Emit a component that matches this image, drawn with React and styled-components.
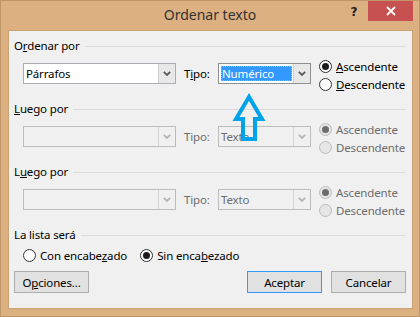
import React from 'react';
import styled, { createGlobalStyle } from 'styled-components';

const GlobalStyle = createGlobalStyle`
  html, body {
    margin: 0;
    padding: 0;
    background: #ffffff;
  }
  body {
    font-family: "Noto Sans", "Open Sans", Arial, sans-serif;
    font-size: 11.5px;
    letter-spacing: -0.15px;
  }
`;

const Window = styled.div`
  position: relative;
  width: 420px;
  height: 317px;
  box-sizing: border-box;
  background: #dcb080;
  border: 1px solid #bf9667;
  display: flex;
  flex-direction: column;
`;

const TitleBar = styled.div`
  height: 29px;
  display: grid;
  grid-template-columns: 1fr auto 1fr;
  align-items: start;
`;

const Title = styled.div`
  grid-column: 2;
  font-size: 14px;
  letter-spacing: 0;
  line-height: 28px;
  color: #333333;
`;

const Controls = styled.div`
  grid-column: 3;
  justify-self: end;
  display: flex;
  align-items: flex-start;
  margin-right: 6px;
`;

const HelpButton = styled.div`
  width: 16px;
  margin-right: 6px;
  font-family: "DejaVu Sans", sans-serif;
  font-weight: bold;
  font-size: 12px;
  line-height: 22px;
  color: #1e1e1e;
  text-align: center;
`;

const CloseButton = styled.div`
  width: 45px;
  height: 20px;
  background: #c75050;
  display: flex;
  align-items: center;
  justify-content: center;
`;

const Panel = styled.div`
  flex: 1;
  margin: 0 6px 7px 7px;
  border: 1px solid #c9a274;
  background: #f0f0f0;
  padding: 7px 6px 0 5px;
  display: flex;
  flex-direction: column;
`;

const Section = styled.div`
  display: flex;
  flex-direction: column;
  margin-bottom: 8px;
`;

const GroupHeader = styled.div`
  height: 16px;
  display: flex;
  align-items: center;
  gap: 5px;
  margin-bottom: 3px;
  color: #000000;
  line-height: 16px;
`;

const GroupLine = styled.div`
  flex: 1;
  height: 1px;
  background: #dcdcdc;
  margin-top: 1px;
`;

const Row = styled.div`
  height: 36px;
  display: flex;
  align-items: flex-start;
  padding-left: 9px;

  & > * {
    flex-shrink: 0;
  }
`;

const Combo = styled.div`
  margin-top: 6px;
  width: ${(p) => p.$width}px;
  height: 21px;
  box-sizing: border-box;
  border: 1px solid ${(p) => (p.$disabled ? '#bcbcbc' : p.$focused ? '#8e8f8f' : '#abadb3')};
  background: ${(p) => (p.$disabled ? '#f0f0f0' : '#ffffff')};
  display: flex;
`;

const ComboValue = styled.div`
  flex: 1;
  padding-left: 2px;
  line-height: 19px;
  color: ${(p) => (p.$disabled ? '#6d6d6d' : '#000000')};
  overflow: hidden;
  white-space: nowrap;
`;

const Selection = styled.div`
  flex: 1;
  margin: 2px 1px 2px 2px;
  padding-left: 1px;
  background: #3399ff;
  outline: 1px dotted #f5a25a;
  outline-offset: -1px;
  color: #ffffff;
  line-height: 15px;
  white-space: nowrap;
`;

const DropButton = styled.div`
  width: 16px;
  border-left: 1px solid ${(p) => (p.$disabled ? '#d4d4d4' : '#d0d0d0')};
  background: ${(p) => (p.$disabled ? '#f0f0f0' : '#e8e8e8')};
  display: flex;
  align-items: center;
  justify-content: center;
`;

const TypeLabel = styled.div`
  margin: 6px 0 0 8px;
  width: 34px;
  line-height: 21px;
  color: ${(p) => (p.$disabled ? '#6d6d6d' : '#000000')};
`;

const RadioColumn = styled.div`
  margin-left: 8px;
  display: flex;
  flex-direction: column;
`;

const RadioItem = styled.div`
  height: 18px;
  display: flex;
  align-items: center;
  gap: 4px;
  color: ${(p) => (p.$disabled ? '#6d6d6d' : '#000000')};
  white-space: nowrap;
`;

const RadioCircle = styled.span`
  width: 13px;
  height: 13px;
  box-sizing: border-box;
  border-radius: 50%;
  border: 1px solid ${(p) => (p.$disabled ? '#bcbcbc' : '#333333')};
  background: ${(p) => (p.$disabled ? '#e6e6e6' : '#ffffff')};
  display: flex;
  align-items: center;
  justify-content: center;
  flex-shrink: 0;

  &::after {
    content: '';
    display: ${(p) => (p.$checked ? 'block' : 'none')};
    width: 7px;
    height: 7px;
    border-radius: 50%;
    background: ${(p) => (p.$disabled ? '#6d6d6d' : '#1b1b1b')};
  }
`;

const HeaderRadios = styled.div`
  display: flex;
  padding-left: 9px;
  gap: 13px;
`;

const ButtonBar = styled.div`
  margin-top: 7px;
  display: flex;
  align-items: center;
`;

const Button = styled.div`
  width: 75px;
  height: 22px;
  box-sizing: border-box;
  border: 1px solid ${(p) => (p.$default ? '#3399ff' : '#adadad')};
  background: #e1e1e1;
  display: flex;
  align-items: center;
  justify-content: center;
  color: #000000;
  margin-left: ${(p) => p.$gap || 0}px;
`;

const Spacer = styled.div`
  flex: 1;
`;

const Arrow = styled.svg`
  position: absolute;
  left: 0;
  top: 0;
  pointer-events: none;
`;

const Chevron = ({ disabled }) => (
  <svg width="8" height="5" viewBox="0 0 8 5">
    <path d="M0.8 0.8 L4 4 L7.2 0.8" fill="none" stroke={disabled ? '#b4b4b4' : '#5a5a5a'} strokeWidth="1.8" />
  </svg>
);

const Radio = ({ checked, disabled, children }) => (
  <RadioItem $disabled={disabled}>
    <RadioCircle $checked={checked} $disabled={disabled} />
    <span>{children}</span>
  </RadioItem>
);

function SortRow({ disabled, first }) {
  return (
    <Row>
      <Combo $width={153} $disabled={disabled}>
        <ComboValue $disabled={disabled}>{first ? 'Párrafos' : ''}</ComboValue>
        <DropButton $disabled={disabled}>
          <Chevron disabled={disabled} />
        </DropButton>
      </Combo>
      <TypeLabel $disabled={disabled}>
        {first ? <>T<u>i</u>po:</> : 'Tipo:'}
      </TypeLabel>
      <Combo $width={93} $disabled={disabled} $focused={first}>
        {first ? <Selection>Numérico</Selection> : <ComboValue $disabled>Texto</ComboValue>}
        <DropButton $disabled={disabled}>
          <Chevron disabled={disabled} />
        </DropButton>
      </Combo>
      <RadioColumn>
        <Radio checked disabled={disabled}>
          {first ? <><u>A</u>scendente</> : 'Ascendente'}
        </Radio>
        <Radio disabled={disabled}>
          {first ? <><u>D</u>escendente</> : 'Descendente'}
        </Radio>
      </RadioColumn>
    </Row>
  );
}

export default function App() {
  return (
    <>
      <GlobalStyle />
      <Window>
        <TitleBar>
          <Title>Ordenar texto</Title>
          <Controls>
            <HelpButton>?</HelpButton>
            <CloseButton>
              <svg width="10" height="10" viewBox="0 0 10 10">
                <path d="M1 1 L9 9 M9 1 L1 9" stroke="#ffffff" strokeWidth="1.8" />
              </svg>
            </CloseButton>
          </Controls>
        </TitleBar>
        <Panel>
          <Section>
            <GroupHeader>
              <span>O<u>r</u>denar por</span>
              <GroupLine />
            </GroupHeader>
            <SortRow first />
          </Section>
          <Section>
            <GroupHeader>
              <span><u>L</u>uego por</span>
              <GroupLine />
            </GroupHeader>
            <SortRow disabled />
          </Section>
          <Section>
            <GroupHeader>
              <span>L<u>u</u>ego por</span>
              <GroupLine />
            </GroupHeader>
            <SortRow disabled />
          </Section>
          <GroupHeader>
            <span>La lista será</span>
            <GroupLine />
          </GroupHeader>
          <HeaderRadios>
            <Radio>Con encabe<u>z</u>ado</Radio>
            <Radio checked>Sin enca<u>b</u>ezado</Radio>
          </HeaderRadios>
          <ButtonBar>
            <Button>O<u>p</u>ciones...</Button>
            <Spacer />
            <Button $default>Aceptar</Button>
            <Button $gap={9}>Cancelar</Button>
          </ButtonBar>
        </Panel>
        <Arrow width="420" height="317" viewBox="0 0 420 317">
          <path
            d="M248 96 L235 118 L242 118 L242 138 L254 138 L254 118 L261 118 Z"
            fill="none"
            stroke="#00a2e8"
            strokeWidth="4"
            strokeLinejoin="miter"
          />
        </Arrow>
      </Window>
    </>
  );
}
